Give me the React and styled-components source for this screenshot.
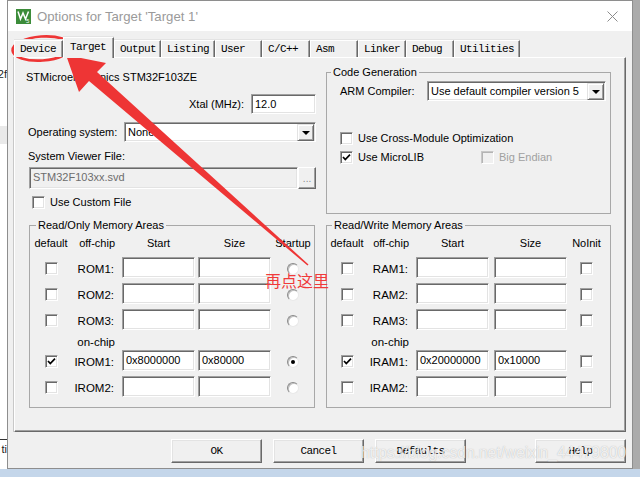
import React from 'react'
import styled, { createGlobalStyle } from 'styled-components'

const GlobalStyle = createGlobalStyle`
    html, body {
        margin: 0;
        padding: 0;
        background: #f0f0f0;
    }
    body {
        font-family: "Liberation Sans", Arial, sans-serif;
        font-size: 11px;
        color: #000;
    }
    * {
        box-sizing: border-box;
    }
`

const Screen = styled.div`
    position: relative;
    width: 640px;
    height: 477px;
    overflow: hidden;
    display: grid;
    grid-template-columns: 7px 626px 7px;
    grid-template-rows: 469px 8px;
    background: #c4d6ea;
`

// the window behind the dialog, only a sliver of it shows on the left
const BackWindow = styled.div`
    background: #fff;
    overflow: hidden;
    display: flex;
    flex-direction: column;
    align-items: flex-end;
`
const BackText = styled.div`
    margin-top: ${p => p.$top}px;
    white-space: nowrap;
    line-height: 13px;
    color: #222;
    font-size: 11px;
`
const BackBand = styled.div`
    align-self: stretch;
    margin-top: ${p => p.$top}px;
    height: ${p => p.$h}px;
    background: ${p => p.$bg};
`
const BackStrip = styled.div`
    background: #ababab;
`

const Dialog = styled.div`
    background: #f0f0f0;
    border: 1px solid #8e8e8e;
    display: flex;
    flex-direction: column;
`
const TitleBar = styled.div`
    height: 30px;
    background: #fff;
    display: flex;
    align-items: center;
    padding: 0 14px 0 8px;
`
const TitleText = styled.div`
    margin-left: 6px;
    flex: 1;
    font-size: 13.2px;
    color: #9a9a9a;
    padding-top: 1px;
`
const Body = styled.div`
    flex: 1;
    display: flex;
    flex-direction: column;
    padding: 0 6px 5px 6px;
`

const monoFont = `"Liberation Mono", "Courier New", monospace`

const TabBar = styled.div`
    height: 26px;
    display: flex;
    align-items: flex-end;
    position: relative;
    z-index: 1;
`
const Tab = styled.div`
    width: ${p => p.$w}px;
    height: ${p => p.$active ? 21 : 17}px;
    margin-bottom: ${p => p.$active ? -1 : 0}px;
    padding: ${p => p.$active ? '2px 0 0 6px' : '0 0 0 5px'};
    display: flex;
    align-items: ${p => p.$active ? 'flex-start' : 'center'};
    background: #f0f0f0;
    border-top: 1px solid #fff;
    border-left: 1px solid #fff;
    border-right: 1px solid #696969;
    box-shadow: inset -1px 0 0 #a0a0a0, 0 -1px 0 #e3e3e3;
    font-family: ${monoFont};
    font-size: 11px;
    letter-spacing: -0.6px;
    line-height: 14px;
    white-space: nowrap;
    overflow: hidden;
`

const Panel = styled.div`
    height: 375px;
    background: #f0f0f0;
    border-top: 1px solid #fff;
    border-left: 1px solid #fff;
    border-right: 1px solid #696969;
    border-bottom: 1px solid #696969;
    box-shadow: inset -1px -1px 0 #a0a0a0, -1px 0 0 #c8c8c8;
    padding: 8px 13px 0 13px;
    display: grid;
    grid-template-columns: 288px 285px;
    column-gap: 10px;
    row-gap: 5px;
    align-content: start;
`

const Column = styled.div`
    display: flex;
    flex-direction: column;
    padding-top: ${p => p.$top || 0}px;
`
const DeviceName = styled.div`
    line-height: 14px;
    margin-left: -2px;
`
const Row = styled.div`
    display: flex;
    align-items: center;
    justify-content: ${p => p.$justify || 'flex-start'};
    gap: ${p => p.$gap || 0}px;
    margin-top: ${p => p.$top || 0}px;
    margin-left: ${p => p.$left || 0}px;
    width: ${p => p.$w ? p.$w + 'px' : 'auto'};
`
const Label = styled.div`
    line-height: 14px;
    white-space: nowrap;
    width: ${p => p.$w ? p.$w + 'px' : 'auto'};
    color: ${p => p.$disabled ? '#a0a0a0' : '#000'};
    margin-top: ${p => p.$top || 0}px;
`

const Field = styled.div`
    width: ${p => p.$w}px;
    height: ${p => p.$h || 21}px;
    background: ${p => p.$disabled ? '#f0f0f0' : '#fff'};
    color: ${p => p.$disabled ? '#6d6d6d' : '#000'};
    border: 1px solid;
    border-color: #a0a0a0 #fff #fff #a0a0a0;
    box-shadow: inset 1px 1px 0 #696969, inset -1px -1px 0 #e3e3e3;
    padding: 1px 2px 0 3px;
    line-height: 16px;
    font-size: 11px;
    display: flex;
    justify-content: space-between;
    align-items: flex-start;
    white-space: nowrap;
    overflow: hidden;
`
const DropButton = styled.div`
    width: 17px;
    height: 17px;
    margin-right: -1px;
    background: #f0f0f0;
    border: 1px solid;
    border-color: #e3e3e3 #696969 #696969 #e3e3e3;
    box-shadow: inset 1px 1px 0 #fff, inset -1px -1px 0 #a0a0a0;
    display: flex;
    align-items: center;
    justify-content: center;
    flex-shrink: 0;
`
const Triangle = styled.span`
    width: 0;
    height: 0;
    border-left: 4px solid transparent;
    border-right: 4px solid transparent;
    border-top: 4px solid #000;
`
const BrowseButton = styled.div`
    width: 18px;
    height: 22px;
    background: #f0f0f0;
    border: 1px solid;
    border-color: #fff #696969 #696969 #fff;
    box-shadow: inset -1px -1px 0 #a0a0a0;
    color: #8a8a8a;
    display: flex;
    justify-content: center;
    align-items: flex-end;
    padding-bottom: 4px;
    font-size: 10px;
    line-height: 10px;
`

const CheckBox = styled.span`
    width: 13px;
    height: 13px;
    flex-shrink: 0;
    display: inline-flex;
    align-items: center;
    justify-content: center;
    background: ${p => p.$disabled ? '#f0f0f0' : '#fff'};
    border: 1px solid;
    border-color: ${p => p.$disabled ? '#c8c8c8 #fff #fff #c8c8c8' : '#a0a0a0 #fff #fff #a0a0a0'};
    box-shadow: ${p => p.$disabled ? 'inset 1px 1px 0 #b4b4b4' : 'inset 1px 1px 0 #696969, inset -1px -1px 0 #e3e3e3'};
`
const Radio = styled.span`
    width: 12px;
    height: 12px;
    border-radius: 50%;
    background: #fff;
    border: 1px solid;
    border-color: #8a8a8a #e8e8e8 #e8e8e8 #8a8a8a;
    box-shadow: inset 1px 1px 0 #c0c0c0;
    display: inline-flex;
    align-items: center;
    justify-content: center;
    &::after {
        content: '';
        width: 4px;
        height: 4px;
        border-radius: 50%;
        background: ${p => p.$on ? '#000' : 'transparent'};
    }
`

const Group = styled.fieldset`
    margin: 0 0 0 ${p => p.$left || 0}px;
    width: ${p => p.$w}px;
    height: ${p => p.$h ? p.$h + 'px' : 'auto'};
    border: 1px solid #a8a8a8;
    padding: ${p => p.$pad};
    min-width: 0;
`
const Legend = styled.legend`
    padding: 0 2px;
    margin-left: ${p => p.$left}px;
    line-height: 13px;
    font-size: 11px;
`

const MemGrid = styled.div`
    display: grid;
    grid-template-columns: ${p => p.$cols};
    grid-template-rows: 22px 26px 26px 26px 15px 26px 26px;
    align-items: start;
`
const HeadCell = styled.div`
    line-height: 16px;
    text-align: ${p => p.$align || 'center'};
    width: ${p => p.$w ? p.$w + 'px' : 'auto'};
    padding-right: ${p => p.$align === 'right' ? 7 : 0}px;
    white-space: nowrap;
`
const Cell = styled.div`
    height: 21px;
    padding-top: 2px;
    display: flex;
    align-items: center;
    justify-content: ${p => p.$justify || 'center'};
    padding-right: ${p => p.$justify === 'flex-end' ? 8 : 0}px;
    white-space: nowrap;
    font-size: 11.5px;
`
const OnChip = styled.div`
    line-height: 14px;
    text-align: right;
    padding-right: 7px;
    font-size: 11.5px;
`

const ButtonRow = styled.div`
    margin-top: 7px;
    display: flex;
    justify-content: flex-end;
    gap: 11px;
`
const Button = styled.div`
    width: 91px;
    height: 24px;
    margin-left: ${p => p.$gapLeft || 0}px;
    background: #f0f0f0;
    border: 1px solid;
    border-color: #fff #696969 #696969 #fff;
    box-shadow: inset -1px -1px 0 #a0a0a0, inset 1px 1px 0 #e3e3e3;
    display: flex;
    align-items: center;
    justify-content: center;
    font-family: ${monoFont};
    font-size: 11px;
    letter-spacing: -0.6px;
`

const Overlay = styled.svg`
    position: absolute;
    left: 0;
    top: 0;
    pointer-events: none;
`
const Note = styled.span`
    position: absolute;
    left: 265px;
    top: 271px;
    font-family: "Noto Sans CJK SC", sans-serif;
    font-size: 16px;
    line-height: 18px;
    color: #f03a3a;
    pointer-events: none;
`
const Watermark = styled.span`
    position: absolute;
    left: 361px;
    top: 444px;
    font-family: "Liberation Sans", Arial, sans-serif;
    font-size: 15.6px;
    line-height: 18px;
    color: rgba(255, 255, 255, 0.8);
    text-shadow: 0 0 1px rgba(110, 110, 110, 0.5);
    pointer-events: none;
`

const tabs = [
    { label: 'Device', w: 49 },
    { label: 'Target', w: 51, active: true },
    { label: 'Output', w: 47 },
    { label: 'Listing', w: 54 },
    { label: 'User', w: 47 },
    { label: 'C/C++', w: 48 },
    { label: 'Asm', w: 48 },
    { label: 'Linker', w: 48 },
    { label: 'Debug', w: 48 },
    { label: 'Utilities', w: 66 },
]

const romRows = [
    { label: 'ROM1:' },
    { label: 'ROM2:' },
    { label: 'ROM3:' },
    { onchip: true },
    { label: 'IROM1:', start: '0x8000000', size: '0x80000', checked: true, on: true },
    { label: 'IROM2:' },
]
const ramRows = [
    { label: 'RAM1:' },
    { label: 'RAM2:' },
    { label: 'RAM3:' },
    { onchip: true },
    { label: 'IRAM1:', start: '0x20000000', size: '0x10000', checked: true },
    { label: 'IRAM2:' },
]

function Check({ checked, disabled }) {
    return (
        <CheckBox $disabled={disabled}>
            {checked && (
                <svg width="9" height="9" viewBox="0 0 9 9">
                    <path d="M1 4 L3.3 6.6 L8 1.6" stroke="#000" strokeWidth="1.7" fill="none" />
                </svg>
            )}
        </CheckBox>
    )
}

function KeilIcon() {
    return (
        <svg width="15" height="15" viewBox="0 0 15 15">
            <rect width="15" height="15" fill="#3c8c3a" />
            <path d="M2 2.5 L4.5 10 L7 4 L9.5 10 L12.5 2.5" stroke="#fff" strokeWidth="1.5" fill="none" />
            <text x="10" y="14" fontSize="6" fill="#fff" fontFamily="Liberation Sans">5</text>
        </svg>
    )
}

function MemoryArea({ title, legendLeft, width, cols, rows, last, extra }) {
    return (
        <Group $w={width} $left={extra} $pad="3px 0 5px 1px">
            <Legend $left={legendLeft}>{title}</Legend>
            <MemGrid $cols={cols}>
                <HeadCell>default</HeadCell>
                <HeadCell $align="right">off-chip</HeadCell>
                <HeadCell $w={73}>Start</HeadCell>
                <HeadCell $w={73}>Size</HeadCell>
                <HeadCell>{last}</HeadCell>
                {rows.map((r, i) => r.onchip ? (
                    <React.Fragment key={i}>
                        <div />
                        <OnChip>on-chip</OnChip>
                        <div />
                        <div />
                        <div />
                    </React.Fragment>
                ) : (
                    <React.Fragment key={i}>
                        <Cell><Check checked={r.checked} /></Cell>
                        <Cell $justify="flex-end">{r.label}</Cell>
                        <Field $w={73}>{r.start || ''}</Field>
                        <Field $w={73}>{r.size || ''}</Field>
                        <Cell>{last === 'Startup' ? <Radio $on={r.on} /> : <Check />}</Cell>
                    </React.Fragment>
                ))}
            </MemGrid>
        </Group>
    )
}

export default function App() {
    return (
        <Screen>
            <GlobalStyle />
            <BackWindow>
                <BackText $top={68}>2f</BackText>
                <BackBand $top={45} $h={18} $bg="#e9e9e9" />
                <BackBand $top={295} $h={1} $bg="#333" />
                <BackText $top={3}>ti</BackText>
            </BackWindow>

            <Dialog>
                <TitleBar>
                    <KeilIcon />
                    <TitleText>Options for Target 'Target 1'</TitleText>
                    <svg width="11" height="11" viewBox="0 0 11 11">
                        <path d="M0.5 0.5 L10.5 10.5 M10.5 0.5 L0.5 10.5" stroke="#8c8c8c" strokeWidth="1" />
                    </svg>
                </TitleBar>
                <Body>
                    <TabBar>
                        {tabs.map(t => (
                            <Tab key={t.label} $w={t.w} $active={t.active}>{t.label}</Tab>
                        ))}
                    </TabBar>
                    <Panel>
                        <Column $top={4}>
                            <DeviceName>STMicroelectronics STM32F103ZE</DeviceName>
                            <Row $top={10} $justify="flex-end" $gap={7}>
                                <Label>Xtal (MHz):</Label>
                                <Field $w={65} $h={20}>12.0</Field>
                            </Row>
                            <Row $top={8} $justify="space-between">
                                <Label>Operating system:</Label>
                                <Field $w={192} $h={20}>
                                    None
                                    <DropButton><Triangle /></DropButton>
                                </Field>
                            </Row>
                            <Label $top={7}>System Viewer File:</Label>
                            <Row $top={4} $left={1}>
                                <Field $w={270} $h={22} $disabled>STM32F103xx.svd</Field>
                                <BrowseButton>...</BrowseButton>
                            </Row>
                            <Row $top={6} $left={4} $gap={5}>
                                <Check />
                                <Label>Use Custom File</Label>
                            </Row>
                        </Column>

                        <Group $w={285} $h={148} $pad="2px 4px 0 13px">
                            <Legend $left={-9}>Code Generation</Legend>
                            <Row>
                                <Label $w={87}>ARM Compiler:</Label>
                                <Field $w={179} $h={20}>
                                    Use default compiler version 5
                                    <DropButton><Triangle /></DropButton>
                                </Field>
                            </Row>
                            <Row $top={30} $gap={5}>
                                <Check />
                                <Label>Use Cross-Module Optimization</Label>
                            </Row>
                            <Row $top={5}>
                                <Row $gap={5} $w={141}>
                                    <Check checked />
                                    <Label>Use MicroLIB</Label>
                                </Row>
                                <Row $gap={5}>
                                    <Check disabled />
                                    <Label $disabled>Big Endian</Label>
                                </Row>
                            </Row>
                        </Group>

                        <MemoryArea
                            title="Read/Only Memory Areas"
                            legendLeft={5}
                            width={286}
                            extra={1}
                            cols="40px 51px 76px 75px 40px"
                            rows={romRows}
                            last="Startup"
                        />
                        <MemoryArea
                            title="Read/Write Memory Areas"
                            legendLeft={4}
                            width={285}
                            cols="38px 50px 78px 78px 29px"
                            rows={ramRows}
                            last="NoInit"
                        />
                    </Panel>
                    <ButtonRow>
                        <Button>OK</Button>
                        <Button>Cancel</Button>
                        <Button>Defaults</Button>
                        <Button $gapLeft={58}>Help</Button>
                    </ButtonRow>
                </Body>
            </Dialog>

            <BackStrip />
            <div style={{ gridColumn: '1 / 4' }} />

            <Overlay width="640" height="477" viewBox="0 0 640 477">
                <ellipse cx="42" cy="48.5" rx="29.5" ry="12" transform="rotate(-4 42 48.5)"
                    fill="none" stroke="#ee3535" strokeWidth="2.6" />
                <polygon
                    points="66,55 106,63 97,72 308.5,264.5 307.5,265.5 89,81 79,92"
                    fill="#ee3535"
                />
            </Overlay>
            <Note>再点这里</Note>
            <Watermark>https://blog.csdn.net/weixin_44479800</Watermark>
        </Screen>
    )
}
